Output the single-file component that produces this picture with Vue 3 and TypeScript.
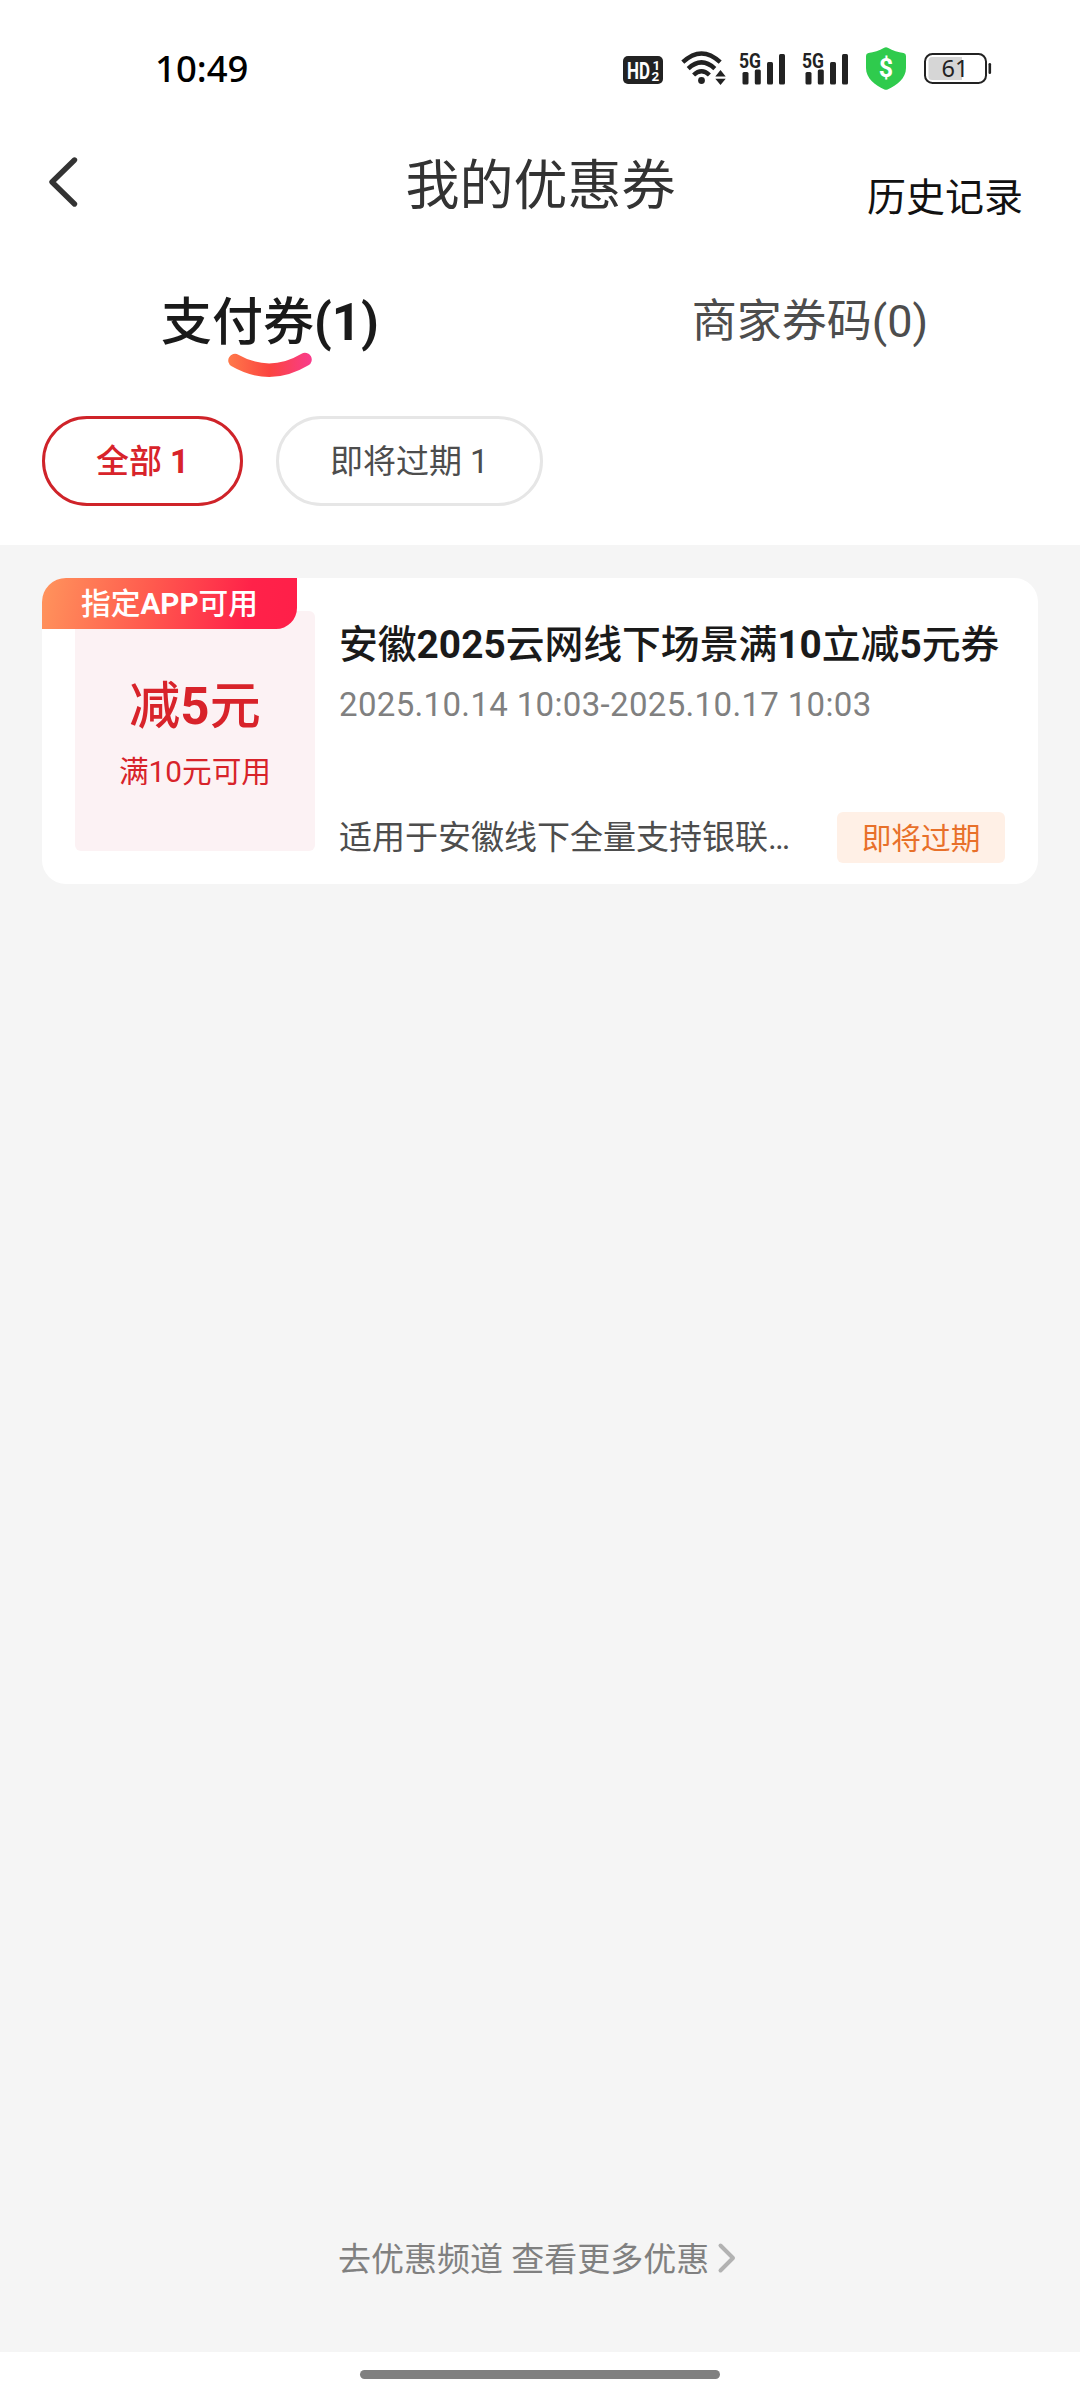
<script setup lang="ts">
import { ref } from 'vue'

interface Tab { key: string; label: string; count: number }
interface Filter { key: string; label: string; count: number }
interface Coupon {
  tag: string
  amount: string
  condition: string
  title: string
  period: string
  scope: string
  status: string
}

const tabs: Tab[] = [
  { key: 'pay', label: '支付券', count: 1 },
  { key: 'merchant', label: '商家券码', count: 0 },
]
const filters: Filter[] = [
  { key: 'all', label: '全部', count: 1 },
  { key: 'soon', label: '即将过期', count: 1 },
]
const coupons: Coupon[] = [
  {
    tag: '指定APP可用',
    amount: '减5元',
    condition: '满10元可用',
    title: '安徽2025云网线下场景满10立减5元券',
    period: '2025.10.14 10:03-2025.10.17 10:03',
    scope: '适用于安徽线下全量支持银联…',
    status: '即将过期',
  },
]
const activeTab = ref('pay')
const activeFilter = ref('all')

/* Digits and Latin letters are set heavier than the Chinese text around them. */
const runs = (text: string): string[] => text.match(/[A-Za-z0-9()]+|[^A-Za-z0-9()]+/g) ?? []
const isLatin = (run: string): boolean => /^[A-Za-z0-9()]/.test(run)
</script>

<template>
  <div class="screen">
    <header class="top">
      <div class="status">
        <span class="clock">10:49</span>
        <div class="status-icons">
          <svg class="hd" width="40" height="28" viewBox="0 0 40 28">
            <rect width="40" height="28" rx="5" fill="#222" />
            <text x="4" y="22.500" font-size="24" font-weight="700" fill="#fff" textLength="23" lengthAdjust="spacingAndGlyphs">HD</text>
            <text x="29.500" y="13.500" font-size="13.500" font-weight="700" fill="#fff">1</text>
            <text x="28.500" y="24.500" font-size="13.500" font-weight="700" fill="#fff">2</text>
          </svg>
          <svg class="wifi" width="46" height="36" viewBox="0 0 46 36">
            <g fill="none" stroke="#222" stroke-width="4.400">
              <path d="M1.800 12.200Q20.500-5.200 39.200 12.200" />
              <path d="M7.200 18.600Q20.500 6.200 33.800 18.600" />
              <path d="M12.600 25Q20.500 17.600 28.400 25" />
            </g>
            <circle cx="20.500" cy="30.500" r="3.400" fill="#222" />
            <path d="M39.500 20l5.200 6.400H34.300zM39.500 35l5.200-6.200H34.300z" fill="#222" />
          </svg>
          <div v-for="sim in 2" :key="sim" class="sim">
            <svg width="46" height="34" viewBox="0 0 46 34">
              <text x="0" y="16.500" font-size="20.500" font-weight="700" fill="#222" textLength="22" lengthAdjust="spacingAndGlyphs">5G</text>
              <g fill="#222">
                <rect x="3.500" y="21" width="6" height="12.500" rx="1.500" />
                <rect x="15.800" y="18.500" width="6" height="15" rx="1.500" />
                <rect x="28" y="11" width="6" height="22.500" rx="1.500" />
                <rect x="40" y="3" width="6" height="30.500" rx="1.500" />
              </g>
            </svg>
          </div>
          <svg class="shield" width="40" height="43" viewBox="0 0 40 43">
            <path d="M18.200.7Q20-.2 21.800.7C27 3.600 32 5.300 37.600 6.100Q40 6.500 40 9V21C40 31 31 38.500 21.600 42.500Q20 43.200 18.400 42.500C9 38.500 0 31 0 21V9Q0 6.500 2.400 6.100C8 5.300 13 3.600 18.200.7Z" fill="#2fcb4d" />
            <text x="20" y="30" text-anchor="middle" font-size="25" font-weight="700" fill="#fff">$</text>
          </svg>
          <svg class="battery" width="68" height="32" viewBox="0 0 68 32">
            <rect x="1" y="1" width="61" height="29" rx="7.500" fill="#fff" stroke="#222" stroke-width="2" />
            <path d="M8 4H38V27H8Q4.500 27 4.500 23.500V7.500Q4.500 4 8 4Z" fill="#d6d6d6" />
            <rect x="64.500" y="10" width="2.600" height="11" rx="1.300" fill="#222" />
            <text class="level" x="31" y="24" text-anchor="middle" font-size="23.500" fill="#222">61</text>
          </svg>
        </div>
      </div>

      <nav class="nav">
        <button class="back" aria-label="返回">
          <svg width="32" height="52" viewBox="0 0 32 52">
            <path d="M27.500 4L5 26L27.500 48" fill="none" stroke="#333" stroke-width="5.400" stroke-linecap="round" stroke-linejoin="round" />
          </svg>
        </button>
        <h1>我的优惠券</h1>
        <a class="history">历史记录</a>
      </nav>

      <div class="tabs">
        <button
          v-for="tab in tabs"
          :key="tab.key"
          class="tab"
          :class="{ active: tab.key === activeTab }"
          @click="activeTab = tab.key"
        >
          <span>{{ tab.label }}<span class="latin">({{ tab.count }})</span></span>
          <svg v-if="tab.key === activeTab" class="smile" width="86" height="26" viewBox="0 0 86 26">
            <defs>
              <linearGradient id="smile" x1="0" y1="0" x2="86" y2="0" gradientUnits="userSpaceOnUse">
                <stop offset="0" stop-color="#ff7a4a" />
                <stop offset=".5" stop-color="#fb4440" />
                <stop offset="1" stop-color="#f93b8e" />
              </linearGradient>
            </defs>
            <path d="M8 8.500Q43 28.500 78 7.500" fill="none" stroke="url(#smile)" stroke-width="13.500" stroke-linecap="round" />
          </svg>
        </button>
      </div>

      <div class="filters">
        <button
          v-for="filter in filters"
          :key="filter.key"
          class="filter"
          :class="{ active: filter.key === activeFilter }"
          @click="activeFilter = filter.key"
        >
          {{ filter.label }} <span class="latin">{{ filter.count }}</span>
        </button>
      </div>
    </header>

    <main class="list">
      <article v-for="coupon in coupons" :key="coupon.title" class="coupon">
        <div class="tag">
          <span v-for="(run, i) in runs(coupon.tag)" :key="i" :class="{ latin: isLatin(run) }">{{ run }}</span>
        </div>
        <div class="value">
          <div class="amount">
            <span v-for="(run, i) in runs(coupon.amount)" :key="i" :class="{ latin: isLatin(run) }">{{ run }}</span>
          </div>
          <div class="condition">{{ coupon.condition }}</div>
        </div>
        <div class="detail">
          <h2>
            <span v-for="(run, i) in runs(coupon.title)" :key="i" :class="{ latin: isLatin(run) }">{{ run }}</span>
          </h2>
          <p class="period">{{ coupon.period }}</p>
          <div class="foot">
            <p class="scope">{{ coupon.scope }}</p>
            <span class="state">{{ coupon.status }}</span>
          </div>
        </div>
      </article>

      <a class="more">
        <span>去优惠频道 查看更多优惠</span>
        <svg width="18" height="30" viewBox="0 0 18 30">
          <path d="M2.500 2.500L15 15L2.500 27.500" fill="none" stroke="#b2b2b2" stroke-width="4" stroke-linecap="round" stroke-linejoin="round" />
        </svg>
      </a>
    </main>

    <footer class="gesture"><span class="pill"></span></footer>
  </div>
</template>

<style>
body {
  margin: 0;
  background: #fff;
}
</style>

<style scoped>
.screen {
  width: 1080px;
  height: 2400px;
  display: flex;
  flex-direction: column;
  overflow: hidden;
  background: #fff;
  font-family: Roboto, 'Noto Sans CJK SC', sans-serif;
  color: #1a1a1a;
}
button {
  padding: 0;
  border: 0;
  background: none;
  font: inherit;
  color: inherit;
}
h1, h2, p {
  margin: 0;
  font-weight: 400;
}
svg {
  display: block;
  flex: none;
  overflow: visible;
}
.top {
  flex: none;
  height: 545px;
}
.status {
  display: flex;
  align-items: center;
  justify-content: space-between;
  height: 136px;
  padding: 0 88px 0 155px;
}
.clock {
  font: 500 36.500px/40px 'Noto Sans', sans-serif;
  color: #000;
  margin-top: -1px;
}
.status-icons {
  display: flex;
  align-items: center;
}
.hd { margin: 4px 18px 0 0; }
.wifi { margin-right: 12px; }
.sim { margin-right: 17px; }
.shield { margin: 0 18px 0 1px; }
.battery { margin-top: 1px; }
.level { font-family: 'Noto Sans', sans-serif; }

.nav {
  display: grid;
  grid-template-columns: 1fr auto 1fr;
  height: 128px;
  padding: 0 57px 0 47px;
}
.back {
  justify-self: start;
  align-self: start;
  margin-top: 20px;
}
h1 {
  margin: 11px -11px 0 0;
  font-size: 54px;
  line-height: 80px;
  color: #333;
}
.history {
  justify-self: end;
  margin-top: 32px;
  font-size: 39px;
  line-height: 60px;
  color: #111;
}
.tabs {
  display: flex;
  height: 152px;
}
.tab {
  flex: 1;
  display: flex;
  flex-direction: column;
  align-items: center;
  padding-top: 23px;
  font-size: 45px;
  line-height: 70px;
  color: #4d4d4d;
}
.tab.active {
  padding-top: 24px;
  font-size: 51px;
  font-weight: 500;
  color: #1a1a1a;
}
.latin { font-weight: inherit; }
.tab.active .latin,
.filter.active .latin,
.tag .latin,
.amount .latin,
h2 .latin {
  font-weight: 700;
}
.smile { margin-top: -6px; }

.filters {
  display: flex;
  gap: 33px;
  padding-left: 42px;
}
.filter {
  box-sizing: border-box;
  height: 90px;
  padding: 2px 51px 0;
  border: 3px solid #e6e6e6;
  border-radius: 45px;
  font-size: 33px;
  line-height: 82px;
  letter-spacing: -.04px;
  color: #4d4d4d;
  white-space: nowrap;
}
.filter.active {
  border-color: #cf2329;
  font-weight: 500;
  color: #d8232a;
}
.list {
  flex: 1;
  display: flex;
  flex-direction: column;
  padding: 33px 42px 67px;
  background: #f5f5f5;
}
.coupon {
  position: relative;
  display: flex;
  gap: 24px;
  height: 306px;
  box-sizing: border-box;
  padding: 33px 33px 0;
  border-radius: 24px;
  background: #fff;
}
.tag {
  position: absolute;
  left: 0;
  top: 0;
  width: 255px;
  height: 51px;
  border-radius: 24px 0 21px 0;
  background: linear-gradient(100deg, #ff945c 0%, #ff5a4e 42%, #ff2249 80%, #ff1f49 100%);
  color: #fff;
  font-size: 29.700px;
  font-weight: 500;
  line-height: 52px;
  text-align: center;
}
.value {
  flex: none;
  width: 240px;
  height: 240px;
  border-radius: 6px;
  background: #fcf2f4;
  color: #d8232a;
  text-align: center;
}
.amount {
  margin-top: 61px;
  font-size: 51px;
  font-weight: 500;
  line-height: 70px;
}
.condition {
  margin-top: 10px;
  font-size: 29.700px;
  line-height: 40px;
}
.detail {
  flex: 1;
  min-width: 0;
}
h2 {
  margin-top: 5px;
  font-size: 38.800px;
  font-weight: 500;
  line-height: 58px;
  white-space: nowrap;
}
.period {
  margin-top: 11px;
  font-size: 33px;
  line-height: 40px;
  letter-spacing: .34px;
  color: #808080;
  white-space: nowrap;
}
.foot {
  display: flex;
  align-items: center;
  justify-content: space-between;
  margin-top: 87px;
}
.scope {
  font-size: 33px;
  line-height: 51px;
  color: #4d4d4d;
  white-space: nowrap;
}
.state {
  width: 168px;
  height: 51px;
  border-radius: 6px;
  background: #fff0e6;
  color: #e8702a;
  font-size: 29.700px;
  line-height: 54px;
  text-align: center;
}
.more {
  display: flex;
  align-items: center;
  gap: 9px;
  margin-top: auto;
  padding-left: 296px;
  font-size: 33px;
  line-height: 50px;
  color: #808080;
}
.more svg { margin-top: -5px; }
.gesture {
  flex: none;
  height: 48px;
  display: flex;
  justify-content: center;
}
.pill {
  width: 360px;
  height: 9px;
  margin-top: 18px;
  border-radius: 5px;
  background: #808080;
}
</style>
